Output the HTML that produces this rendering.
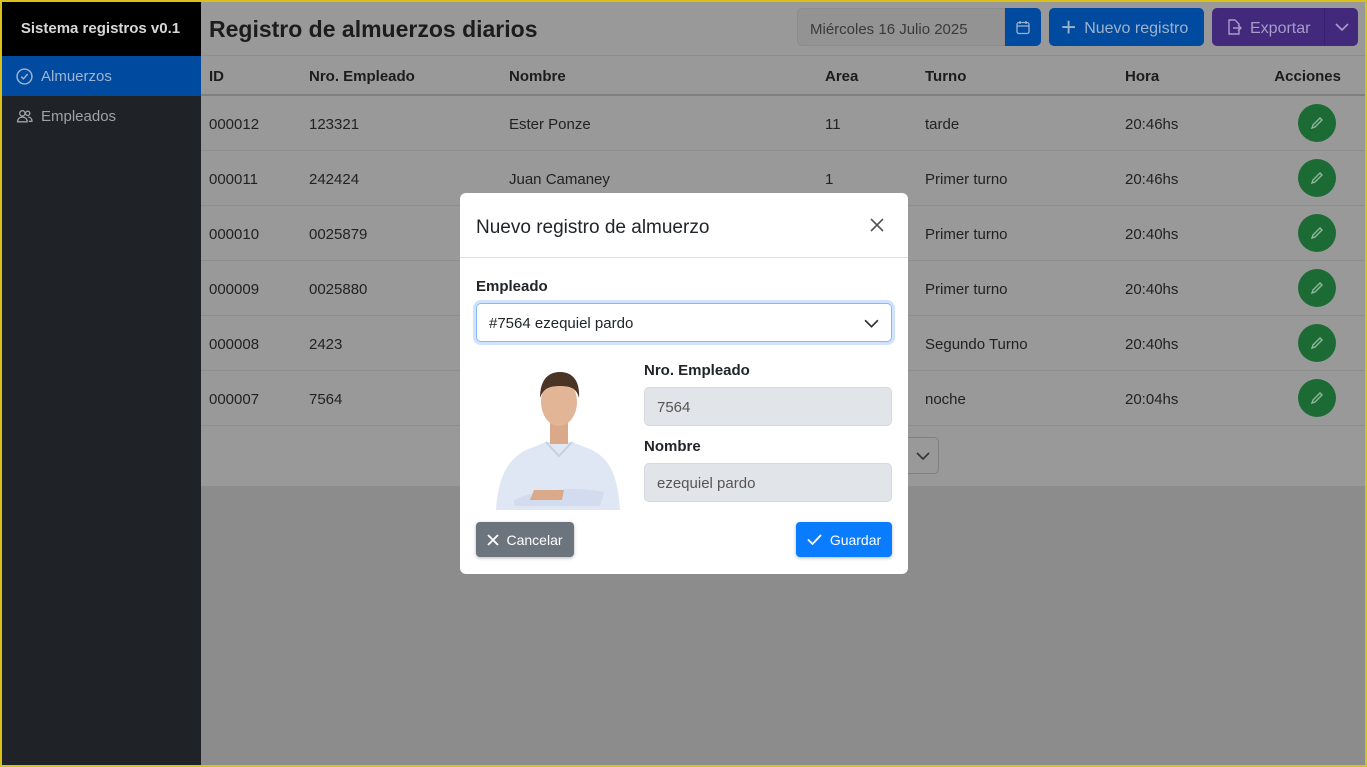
<!DOCTYPE html>
<html><head><meta charset="utf-8"><style>
*{box-sizing:border-box;margin:0;padding:0}
body{width:1367px;height:767px;overflow:hidden;font-family:"Liberation Sans",sans-serif;background:#8c8c8c;position:relative;color:#1a1a1a}
.frame{position:absolute;inset:0;border:2px solid #d8c21a;z-index:50;pointer-events:none}
.side{position:absolute;left:0;top:0;width:201px;height:767px;background:#1f2227}
.brand{height:56px;background:#000;color:#d8d8d8;font-weight:bold;font-size:15px;display:flex;align-items:center;justify-content:center}
.nav{height:40px;display:flex;align-items:center;padding-left:16px;color:#9fa2a6;font-size:15px;gap:8px}
.nav.act{background:#004a9f;color:#9fb4d0}
.main{position:absolute;left:201px;top:0;right:0;height:486px;background:#999}
.top{height:56px;border-bottom:1px solid #8e8e8e;position:relative;background:#999}
h1{position:absolute;left:8px;top:16px;font-size:23px;font-weight:bold;color:#1c1c1c}
.date{position:absolute;left:596px;top:8px;width:208px;height:38px;border:1px solid #8c8c8c;border-radius:5px 0 0 5px;background:#939393;color:#3a3a3a;font-size:15px;padding:12px 12px 0}
.cal{position:absolute;left:804px;top:8px;width:36px;height:38px;background:#004a9f;border-radius:0 5px 5px 0;display:flex;align-items:center;justify-content:center}
.btn{position:absolute;top:8px;height:38px;border-radius:5px;color:#9fb2cc;font-size:16px;display:flex;align-items:center;gap:8px;padding-top:3px}
table{border-collapse:collapse;width:100%;font-size:15px}
th{text-align:left;height:39px;font-weight:bold;padding-left:8px;padding-top:3px;border-bottom:2px solid #808080;color:#1c1c1c}
td{height:55px;padding-left:8px;padding-top:3px;border-bottom:1px solid #8e8e8e;color:#222}
.ed{width:38px;height:38px;border-radius:50%;background:#1c6b35;display:inline-flex;align-items:center;justify-content:center}
.modal{position:absolute;left:460px;top:193px;width:448px;height:381px;background:#fff;border-radius:6px;z-index:10}
.mh{height:65px;border-bottom:1px solid #dee2e6;display:flex;align-items:center;padding:6px 16px 0;font-size:19px;color:#212529}
label{position:absolute;font-weight:bold;font-size:15px;color:#212529}
.inp{position:absolute;border-radius:5px;font-size:15px;padding:2px 12px 0;display:flex;align-items:center}
</style></head><body>
<div class="frame"></div>
<div class="side">
<div class="brand">Sistema registros v0.1</div>
<div class="nav act"><svg width="17" height="17" viewBox="0 0 16 16" fill="none" stroke="#9fb4d0" stroke-width="1.4"><circle cx="8" cy="8" r="7"/><path d="M5 8.2l2 2 4-4.5"/></svg>Almuerzos</div>
<div class="nav"><svg width="17" height="17" viewBox="0 0 16 16" fill="none" stroke="#9fa2a6" stroke-width="1.3"><circle cx="6" cy="5" r="2.5"/><path d="M1.5 13c0-3 2-4.5 4.5-4.5S10.5 10 10.5 13z"/><circle cx="11" cy="5" r="2"/><path d="M11.5 8.5c2 0 3.5 1.5 3.5 4h-3"/></svg>Empleados</div>
</div>
<div class="main">
<div class="top">
<h1>Registro de almuerzos diarios</h1>
<div class="date">Miércoles 16 Julio 2025</div>
<div class="cal"><svg width="14" height="15" viewBox="0 0 14 15" fill="none" stroke="#9fb2cc" stroke-width="1.3"><rect x="1" y="2.5" width="12" height="11" rx="2"/><path d="M1 6h12M4 1v3M10 1v3"/></svg></div>
<div class="btn" style="left:848px;width:155px;background:#004a9f;padding-left:12px"><span style="font-size:26px;font-weight:300;line-height:1;margin-top:-3px">+</span>Nuevo registro</div>
<div class="btn" style="left:1011px;width:146px;background:#43297c;padding-left:14px;padding-top:0"><svg width="16" height="16" viewBox="0 0 16 16" fill="none" stroke="#a99cc7" stroke-width="1.4"><path d="M9 1H3v14h10V8M9 1l4 4v2M7 9h8M12 6l3 3-3 3"/></svg><span style="color:#a99cc7;padding-top:3px">Exportar</span><span style="margin-left:auto;border-left:1px solid #3a2270;height:38px;width:34px;display:flex;align-items:center;justify-content:center"><svg width="14" height="8" viewBox="0 0 14 8" fill="none" stroke="#a99cc7" stroke-width="1.6"><path d="M1 1l6 6 6-6"/></svg></span></div>
</div>
<table>
<tr><th style="width:100px">ID</th><th style="width:200px">Nro. Empleado</th><th style="width:316px">Nombre</th><th style="width:100px">Area</th><th style="width:200px">Turno</th><th style="width:130px">Hora</th><th style="text-align:right;padding-right:26px">Acciones</th></tr>
<tr><td>000012</td><td>123321</td><td>Ester Ponze</td><td>11</td><td>tarde</td><td>20:46hs</td><td style="text-align:right;padding-right:31px;padding-top:0"><span class="ed"><svg width="14" height="14" viewBox="0 0 14 14" fill="none" stroke="#8fb89a" stroke-width="1.4"><path d="M2 12l1-3 7-7 2 2-7 7z"/></svg></span></td></tr>
<tr><td>000011</td><td>242424</td><td>Juan Camaney</td><td>1</td><td>Primer turno</td><td>20:46hs</td><td style="text-align:right;padding-right:31px;padding-top:0"><span class="ed"><svg width="14" height="14" viewBox="0 0 14 14" fill="none" stroke="#8fb89a" stroke-width="1.4"><path d="M2 12l1-3 7-7 2 2-7 7z"/></svg></span></td></tr>
<tr><td>000010</td><td>0025879</td><td></td><td></td><td>Primer turno</td><td>20:40hs</td><td style="text-align:right;padding-right:31px;padding-top:0"><span class="ed"><svg width="14" height="14" viewBox="0 0 14 14" fill="none" stroke="#8fb89a" stroke-width="1.4"><path d="M2 12l1-3 7-7 2 2-7 7z"/></svg></span></td></tr>
<tr><td>000009</td><td>0025880</td><td></td><td></td><td>Primer turno</td><td>20:40hs</td><td style="text-align:right;padding-right:31px;padding-top:0"><span class="ed"><svg width="14" height="14" viewBox="0 0 14 14" fill="none" stroke="#8fb89a" stroke-width="1.4"><path d="M2 12l1-3 7-7 2 2-7 7z"/></svg></span></td></tr>
<tr><td>000008</td><td>2423</td><td></td><td></td><td>Segundo Turno</td><td>20:40hs</td><td style="text-align:right;padding-right:31px;padding-top:0"><span class="ed"><svg width="14" height="14" viewBox="0 0 14 14" fill="none" stroke="#8fb89a" stroke-width="1.4"><path d="M2 12l1-3 7-7 2 2-7 7z"/></svg></span></td></tr>
<tr><td>000007</td><td>7564</td><td></td><td></td><td>noche</td><td>20:04hs</td><td style="text-align:right;padding-right:31px;padding-top:0"><span class="ed"><svg width="14" height="14" viewBox="0 0 14 14" fill="none" stroke="#8fb89a" stroke-width="1.4"><path d="M2 12l1-3 7-7 2 2-7 7z"/></svg></span></td></tr>
</table>
<div style="position:absolute;left:680px;top:437px;width:58px;height:37px;border:1px solid #808080;border-radius:5px;display:flex;align-items:center;justify-content:flex-end;padding-right:8px"><svg width="14" height="8" viewBox="0 0 14 8" fill="none" stroke="#333" stroke-width="1.6"><path d="M1 1l6 6 6-6"/></svg></div>
</div>
<div class="modal">
<div class="mh">Nuevo registro de almuerzo<svg style="margin-left:auto;margin-right:8px;margin-top:-6px" width="14" height="14" viewBox="0 0 14 14" stroke="#555" stroke-width="1.6"><path d="M1 1l12 12M13 1L1 13"/></svg></div>
<label style="left:16px;top:85px">Empleado</label>
<div class="inp" style="left:16px;top:110px;width:416px;height:39px;border:1px solid #86b7fe;box-shadow:0 0 0 3px rgba(13,110,253,.2);color:#212529">#7564 ezequiel pardo<svg style="margin-left:auto" width="15" height="9" viewBox="0 0 14 8" fill="none" stroke="#333" stroke-width="1.6"><path d="M1 1l6 6 6-6"/></svg></div>
<svg style="position:absolute;left:34px;top:177px" width="130" height="140" viewBox="0 0 130 140">
<path d="M2 140c2-30 10-50 30-60l20-8h26l20 8c20 10 26 30 28 60z" fill="#dfe6f4"/>
<path d="M52 72l13 14 13-14" fill="none" stroke="#c5d0e4" stroke-width="2"/>
<rect x="56" y="52" width="18" height="22" fill="#d9a98a"/>
<ellipse cx="65" cy="32" rx="18" ry="24" fill="#e2b596"/>
<path d="M46 28c0-18 8-26 20-26s20 8 19 26c-2-8-6-12-19-12s-17 4-20 12z" fill="#4a3426"/>
<path d="M20 130c20-10 60-14 90-8l-4 14H20z" fill="#d3dcee"/>
<path d="M40 120h30l-2 10H36z" fill="#d9a98a"/>
</svg>
<label style="left:184px;top:169px">Nro. Empleado</label>
<div class="inp" style="left:184px;top:194px;width:248px;height:39px;background:#e1e4e8;border:1px solid #d5d8dc;color:#555">7564</div>
<label style="left:184px;top:245px">Nombre</label>
<div class="inp" style="left:184px;top:270px;width:248px;height:39px;background:#e1e4e8;border:1px solid #d5d8dc;color:#555">ezequiel pardo</div>
<div style="position:absolute;left:16px;top:329px;width:98px;height:35px;background:#6c757d;border-radius:4px;color:#fff;font-size:14px;display:flex;align-items:center;justify-content:center;gap:7px;box-shadow:0 1px 3px rgba(0,0,0,.3)"><svg width="12" height="12" viewBox="0 0 12 12" stroke="#fff" stroke-width="1.8"><path d="M1 1l10 10M11 1L1 11"/></svg>Cancelar</div>
<div style="position:absolute;left:336px;top:329px;width:96px;height:35px;background:#0a7cff;border-radius:4px;color:#fff;font-size:14px;display:flex;align-items:center;justify-content:center;gap:8px;box-shadow:0 1px 3px rgba(0,0,0,.3)"><svg width="15" height="11" viewBox="0 0 15 11" fill="none" stroke="#fff" stroke-width="1.8"><path d="M1 5.5l4.5 4.5L14 1"/></svg>Guardar</div>
</div>
</body></html>
